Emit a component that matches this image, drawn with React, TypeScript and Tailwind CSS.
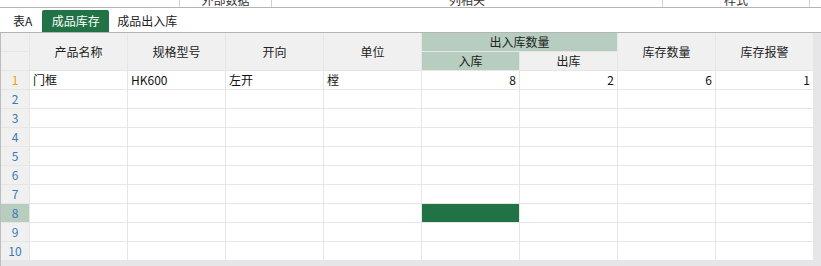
const font = { fontFamily: '"Noto Sans CJK SC", "Noto Sans", sans-serif' };

const columns = ['产品名称', '规格型号', '开向', '单位'];

type Row = { name?: string; spec?: string; dir?: string; unit?: string; inQty?: number; outQty?: number; stock?: number; alarm?: number };

const rows: Row[] = [
  { name: '门框', spec: 'HK600', dir: '左开', unit: '樘', inQty: 8, outQty: 2, stock: 6, alarm: 1 },
  {}, {}, {}, {}, {}, {}, {}, {}, {},
];

function Toolbar() {
  // toolbar above is scrolled out of view; only the bottom of its labels shows
  return (
    <div className="h-[8px] overflow-hidden border-b border-[#b4b4b4] bg-white">
      <div className="-mt-[8px] flex h-[15px] text-[12px] leading-[15px] text-[#333]">
        <div className="w-[180px] border-r border-[#d0d0d0]" />
        <div className="w-[92px] border-r border-[#d0d0d0] text-center">外部数据</div>
        <div className="w-[391px] border-r border-[#d0d0d0] text-center">列相关</div>
        <div className="w-[147px] border-r border-[#d0d0d0] text-center">样式</div>
      </div>
    </div>
  );
}

function Tabs() {
  return (
    <div className="flex h-[24px] items-end bg-white pl-[13px] text-[12px] text-[#222]">
      <div className="flex h-[22px] items-center">表A</div>
      <div className="ml-[10px] flex h-[22px] w-[67px] items-center justify-center rounded-t-[2px] bg-[#217346] text-white">
        成品库存
      </div>
      <div className="ml-[8px] flex h-[22px] items-center">成品出入库</div>
    </div>
  );
}

function Cell({ children, align = 'left', className = '' }: { children?: React.ReactNode; align?: 'left' | 'right'; className?: string }) {
  return (
    <div
      className={`flex items-center bg-white px-[3px] text-[12px] leading-none text-[#111] ${
        align === 'right' ? 'justify-end' : 'justify-start'
      } ${className}`}
    >
      {children}
    </div>
  );
}

export default function App() {
  return (
    <div className="h-[266px] w-[821px] overflow-hidden bg-white" style={font}>
      <Toolbar />
      <Tabs />
      <div className="flex h-[234px] border-t border-[#b4b4b4] bg-[#e6e6e8]">
        <div className="flex w-[813px] flex-col border-l border-[#bdbdbd]">
          <div className="grid grid-cols-[28px_repeat(8,97px)] grid-rows-[repeat(12,18px)] gap-px bg-[#e6e6e6] pb-px">
            {/* header */}
            <div className="bg-[#f0f0f0]" />
            {columns.map((c) => (
              <div
                key={c}
                className="row-span-2 flex items-center justify-center bg-[#f0f0f0] text-[12px] text-[#222]"
              >
                {c}
              </div>
            ))}
            <div className="col-span-2 flex items-center justify-center bg-[#b6cdbf] text-[12px] text-[#222]">
              出入库数量
            </div>
            <div className="row-span-2 flex items-center justify-center bg-[#f0f0f0] text-[12px] text-[#222]">
              库存数量
            </div>
            <div className="row-span-2 flex items-center justify-center bg-[#f0f0f0] text-[12px] text-[#222]">
              库存报警
            </div>
            <div className="bg-[#f0f0f0]" />
            <div className="flex items-center justify-center bg-[#b6cdbf] text-[12px] text-[#222]">入库</div>
            <div className="flex items-center justify-center bg-[#f0f0f0] text-[12px] text-[#222]">出库</div>

            {/* body */}
            {rows.map((r, i) => {
              const n = i + 1;
              const selected = n === 8;
              return [
                <div
                  key={`h${n}`}
                  className={`flex items-center justify-center text-[12px] ${
                    selected ? 'bg-[#b6cdbf]' : 'bg-[#f0f0f0]'
                  } ${n === 1 ? 'text-[#f2a100]' : 'text-[#3a78b8]'}`}
                >
                  {n}
                </div>,
                <Cell key={`a${n}`}>{r.name}</Cell>,
                <Cell key={`b${n}`}>{r.spec}</Cell>,
                <Cell key={`c${n}`}>{r.dir}</Cell>,
                <Cell key={`d${n}`}>{r.unit}</Cell>,
                <Cell key={`e${n}`} align="right" className={selected ? '!bg-[#217346]' : ''}>
                  {r.inQty}
                </Cell>,
                <Cell key={`f${n}`} align="right">{r.outQty}</Cell>,
                <Cell key={`g${n}`} align="right">{r.stock}</Cell>,
                <Cell key={`h2${n}`} align="right">{r.alarm}</Cell>,
              ];
            })}
          </div>
        </div>
        <div className="w-[8px] bg-[#e6e6e8]" />
      </div>
    </div>
  );
}
